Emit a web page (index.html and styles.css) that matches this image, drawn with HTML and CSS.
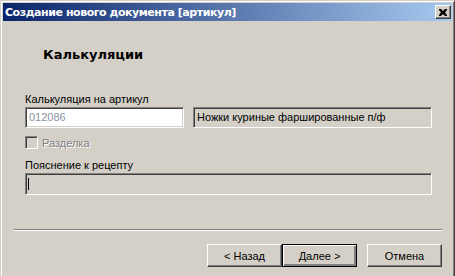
FILE: index.html
```html
<!DOCTYPE html>
<html lang="ru">
<head>
    <meta charset="UTF-8">
    <title>Создание нового документа [артикул]</title>
    <link rel="stylesheet" href="styles.css">
</head>
<body>
    <div class="window">
        <div class="titlebar">
            <span class="title">Создание нового документа [артикул]</span>
            <button class="close" type="button">
                <svg width="8" height="7" viewBox="0 0 8 7">
                    <path d="M0 0h2l2 2 2-2h2v1L6 3.5 8 6v1H6L4 5 2 7H0V6l2-2.5L0 1z" fill="#000"/>
                </svg>
            </button>
        </div>
        <div class="client">
            <h1 class="heading">Калькуляции</h1>
            <div class="form">
                <div class="field-label">Калькуляция на артикул</div>
                <div class="row">
                    <div class="edit code">012086</div>
                    <div class="edit readonly name">Ножки куриные фаршированные п/ф</div>
                </div>
                <div class="check">
                    <span class="box"></span>
                    <span class="check-text">Разделка</span>
                </div>
                <div class="field-label">Пояснение к рецепту</div>
                <div class="edit readonly memo"><span class="caret"></span></div>
            </div>
            <div class="separator"></div>
            <div class="buttons">
                <button class="btn" type="button">&lt; Назад</button>
                <button class="btn default" type="button">Далее &gt;</button>
                <button class="btn cancel" type="button">Отмена</button>
            </div>
        </div>
    </div>
</body>
</html>
```

FILE: styles.css
```css
body {
    margin: 0;
    background-color: #d4d0c8;
    font-family: 'Liberation Sans', Arial, sans-serif;
    font-size: 11px;
    color: #000000;
    overflow: hidden;
}

.window {
    width: 455px;
    height: 300px;
    box-sizing: border-box;
    border: 1px solid;
    border-color: #d4d0c8 #404040 #404040 #d4d0c8;
    box-shadow: inset 1px 1px #ffffff, inset -1px -1px #808080;
    padding: 2px;
}

.titlebar {
    height: 18px;
    display: flex;
    align-items: center;
    justify-content: space-between;
    background: linear-gradient(to right, #0a246a, #a6caf0);
    padding: 0 1px 0 2px;
}

.title {
    color: #ffffff;
    font-family: 'DejaVu Sans', sans-serif;
    font-weight: bold;
    font-size: 11px;
    letter-spacing: -0.45px;
}

.close {
    width: 16px;
    height: 14px;
    padding: 0;
    margin: 0;
    display: flex;
    align-items: center;
    justify-content: center;
    background-color: #d4d0c8;
    border: 1px solid;
    border-color: #ffffff #404040 #404040 #ffffff;
    box-shadow: inset -1px -1px #808080;
}

.client {
    padding: 0 10px;
}

.heading {
    margin: 26px 0 0 30px;
    font-family: 'DejaVu Sans', sans-serif;
    font-size: 13px;
    line-height: 16px;
    font-weight: bold;
}

.form {
    padding: 29px 10px 0 12px;
}

.field-label {
    line-height: 14px;
    margin-bottom: 1px;
}

.row {
    display: flex;
    gap: 9px;
}

.edit {
    height: 21px;
    box-sizing: border-box;
    border: 1px solid;
    border-color: #808080 #ffffff #ffffff #808080;
    box-shadow: inset 1px 1px #404040, inset -1px -1px #d4d0c8;
    background-color: #ffffff;
    padding: 3px 3px 0 3px;
    line-height: 13px;
    white-space: nowrap;
}

.edit.readonly {
    background-color: #d4d0c8;
}

.code {
    width: 159px;
    color: #8a93a0;
}

.name {
    flex: 1;
}

.check {
    display: flex;
    align-items: center;
    gap: 4px;
    margin: 8px 0 9px;
    color: #808080;
    text-shadow: 1px 1px #ffffff;
}

.box {
    width: 13px;
    height: 13px;
    box-sizing: border-box;
    border: 1px solid;
    border-color: #808080 #ffffff #ffffff #808080;
    box-shadow: inset 1px 1px #404040, inset -1px -1px #d4d0c8;
    background-color: #d4d0c8;
}

.memo {
    height: 22px;
    padding: 4px 2px 0 2px;
}

.caret {
    display: block;
    width: 1px;
    height: 12px;
    background-color: #000000;
}

.separator {
    margin: 34px 0 0 1px;
    border-top: 1px solid #808080;
    border-bottom: 1px solid #ffffff;
}

.buttons {
    display: flex;
    justify-content: flex-end;
    margin-top: 13px;
}

.btn {
    width: 75px;
    height: 23px;
    padding: 0;
    margin: 0;
    font-family: 'Liberation Sans', Arial, sans-serif;
    font-size: 11px;
    color: #000000;
    background-color: #d4d0c8;
    border: 1px solid;
    border-color: #ffffff #404040 #404040 #ffffff;
    box-shadow: inset -1px -1px #808080;
}

.btn.default {
    border-color: #000000;
    box-shadow: inset 1px 1px #ffffff, inset -2px -2px #808080, inset -1px -1px #404040;
}

.btn.cancel {
    margin-left: 10px;
}
```
